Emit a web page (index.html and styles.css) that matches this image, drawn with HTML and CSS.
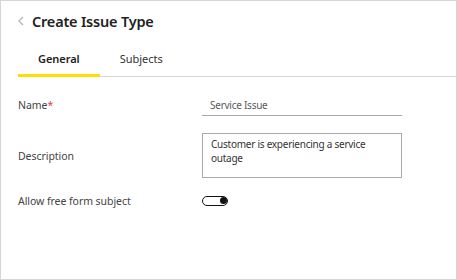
FILE: index.html
```html
<!DOCTYPE html>
<html>
<head>
<meta charset="utf-8">
<link rel="stylesheet" href="styles.css">
</head>
<body>
<div class="panel">
  <div class="header">
    <svg class="back" width="6" height="10" viewBox="0 0 6 10"><path d="M5 1 L1 5 L5 9" fill="none" stroke="#b5b5b5" stroke-width="1.3"/></svg>
    <h1 class="title">Create Issue Type</h1>
  </div>
  <div class="tabs">
    <div class="tab active">General</div>
    <div class="tab">Subjects</div>
  </div>
  <div class="form">
    <div class="row row-name">
      <div class="label">Name<span class="req">*</span></div>
      <div class="field"><div class="input">Service Issue</div></div>
    </div>
    <div class="row row-desc">
      <div class="label">Description</div>
      <div class="field"><div class="textarea">Customer is experiencing a service outage</div></div>
    </div>
    <div class="row row-toggle">
      <div class="label">Allow free form subject</div>
      <div class="field"><div class="toggle"><span class="knob"></span></div></div>
    </div>
  </div>
</div>
</body>
</html>
```
FILE: styles.css
```css
html, body {
  margin: 0;
  padding: 0;
  background: #fff;
}
body {
  font-family: "Noto Sans", "Open Sans", sans-serif;
  color: #333;
}
.panel {
  width: 457px;
  height: 280px;
  box-sizing: border-box;
  border: 1px solid #d4d4d4;
  background: #fff;
}
.header {
  display: flex;
  align-items: center;
  padding: 9px 0 0 17px;
  height: 22px;
}
.back {
  margin-right: 8px;
}
.title {
  margin: 0;
  font-size: 14.5px;
  letter-spacing: -0.2px;
  font-weight: 600;
  color: #222;
  line-height: 22px;
}
.tabs {
  display: flex;
  margin: 8px 0 0 17px;
  border-bottom: 1px solid #d8d8d8;
}
.tab {
  padding: 11px 20px 7px;
  font-size: 11px;
  line-height: 16px;
  color: #333;
  border-bottom: 3px solid transparent;
  margin-bottom: -1px;
}
.tab.active {
  font-weight: 600;
  letter-spacing: -0.05px;
  color: #222;
  border-bottom-color: #ffdd00;
}
.form {
  padding: 0 0 0 17px;
}
.row {
  display: flex;
  align-items: center;
}
.label {
  width: 184px;
  font-size: 10.5px;
  letter-spacing: -0.05px;
  line-height: 16px;
  color: #444;
}
.req {
  color: #e04646;
}
.field {
  width: 200px;
}
.row-name {
  margin-top: 20px;
  align-items: baseline;
}
.input {
  font-size: 10px;
  letter-spacing: -0.25px;
  color: #5a5a5a;
  padding: 0 0 2px 8px;
  border-bottom: 1px solid #aaa;
  line-height: 16px;
}
.row-desc {
  margin-top: 17px;
}
.textarea {
  height: 45px;
  box-sizing: border-box;
  border: 1px solid #aaa;
  padding: 3px 8px;
  font-size: 10px;
  letter-spacing: -0.25px;
  line-height: 14px;
  color: #333;
}
.row-toggle {
  margin-top: 15px;
}
.toggle {
  width: 26px;
  height: 10px;
  box-sizing: border-box;
  border: 1.5px solid #111;
  border-radius: 5px;
  position: relative;
}
.knob {
  position: absolute;
  right: 0.5px;
  top: 0px;
  width: 7px;
  height: 7px;
  border-radius: 50%;
  background: #111;
}
```
